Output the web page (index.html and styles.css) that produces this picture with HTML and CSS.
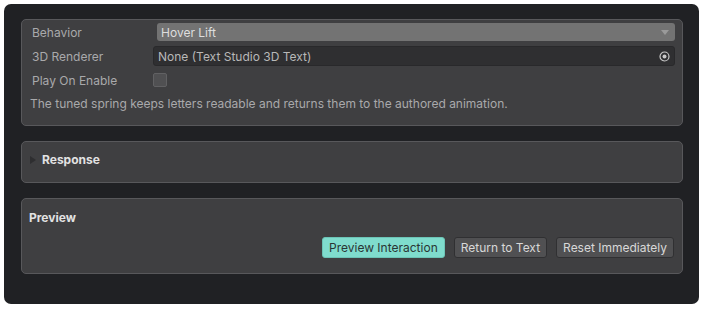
FILE: index.html
```html
<!DOCTYPE html>
<html lang="en">
<head>
<meta charset="UTF-8">
<title>Text Interaction Inspector</title>
<meta name="viewport" content="width=device-width, initial-scale=1.0">
<link rel="stylesheet" href="styles.css">
</head>
<body>

<div class="inspector">

    <!-- main settings -->
    <div class="card settings">
        <div class="row">
            <span class="label">Behavior</span>
            <div class="dropdown">
                <span>Hover Lift</span>
                <span class="arrow"></span>
            </div>
        </div>
        <div class="row">
            <span class="label">3D Renderer</span>
            <div class="object-field">
                <span>None (Text Studio 3D Text)</span>
                <svg class="picker" width="11" height="11" viewBox="0 0 11 11">
                    <circle cx="5.5" cy="5.5" r="4.5" fill="none" stroke="#c8c8c8" stroke-width="1.2"/>
                    <circle cx="5.5" cy="5.5" r="2" fill="#c8c8c8"/>
                </svg>
            </div>
        </div>
        <div class="row">
            <span class="label">Play On Enable</span>
            <span class="checkbox"></span>
        </div>
        <p class="help">The tuned spring keeps letters readable and returns them to the authored animation.</p>
    </div>

    <!-- foldout -->
    <div class="card foldout">
        <span class="triangle"></span>
        <span class="title">Response</span>
    </div>

    <!-- preview -->
    <div class="card preview">
        <div class="title">Preview</div>
        <div class="buttons">
            <button class="primary">Preview Interaction</button>
            <button>Return to Text</button>
            <button>Reset Immediately</button>
        </div>
    </div>

</div>

</body>
</html>
```

FILE: styles.css
```css
* {
    margin: 0;
    padding: 0;
    box-sizing: border-box;
}

body {
    font-family: Inter, "Noto Sans", sans-serif;
    font-size: 12px;
    background: #ffffff;
}

.inspector {
    margin: 4px;
    width: 695px;
    height: 300px;
    background: #202124;
    border-radius: 7px;
    padding: 15px 16px 0 17px;
    display: flex;
    flex-direction: column;
    gap: 15px;
}

.card {
    background: #3f3f41;
    border: 1px solid #58585b;
    border-radius: 5px;
}

/* settings card */
.settings {
    height: 107px;
    padding: 0 7px 0 10px;
}

.row {
    display: flex;
    align-items: center;
    height: 24px;
}

.label {
    width: 121px;
    color: #a9a9ab;
}

.dropdown {
    flex: 1;
    height: 18px;
    margin-left: 4px;
    background: #737373;
    border-radius: 3px;
    color: #dedede;
    padding: 0 6px 0 4px;
    display: flex;
    align-items: center;
    justify-content: space-between;
}

.arrow {
    width: 0;
    height: 0;
    border-left: 4px solid transparent;
    border-right: 4px solid transparent;
    border-top: 5px solid #9a9a9a;
}

.object-field {
    flex: 1;
    height: 20px;
    background: #2f2f31;
    border: 1px solid #29292b;
    border-radius: 3px;
    color: #b8b8b8;
    padding: 0 4px 0 4px;
    display: flex;
    align-items: center;
    justify-content: space-between;
}

.checkbox {
    width: 14px;
    height: 14px;
    background: #505052;
    border: 1px solid #616163;
    border-radius: 2px;
}

.help {
    margin-top: 1px;
    margin-left: -2px;
    color: #a9a9ab;
    line-height: 22px;
}

/* foldout */
.foldout {
    height: 42px;
    display: flex;
    align-items: flex-start;
    padding: 10px 0 0 8px;
    line-height: 15px;
}

.triangle {
    width: 0;
    height: 0;
    margin-top: 4px;
    border-top: 4px solid transparent;
    border-bottom: 4px solid transparent;
    border-left: 6px solid #2e2e30;
}

.title {
    font-weight: 700;
    color: #e2e2e2;
}

.foldout .title {
    margin-left: 6px;
}

/* preview */
.preview {
    height: 76px;
    padding: 11px 8px 0 7px;
}

.buttons {
    display: flex;
    justify-content: flex-end;
    gap: 9px;
    margin-top: 12px;
}

.buttons button {
    font-family: inherit;
    font-size: 12px;
    height: 21px;
    padding: 0 6px;
    background: #505052;
    color: #d8d8d8;
    border: 1px solid #303032;
    border-radius: 3px;
}

.buttons button.primary {
    background: #7fdccd;
    color: #2a3634;
    border-color: #6cc4b6;
}
```
